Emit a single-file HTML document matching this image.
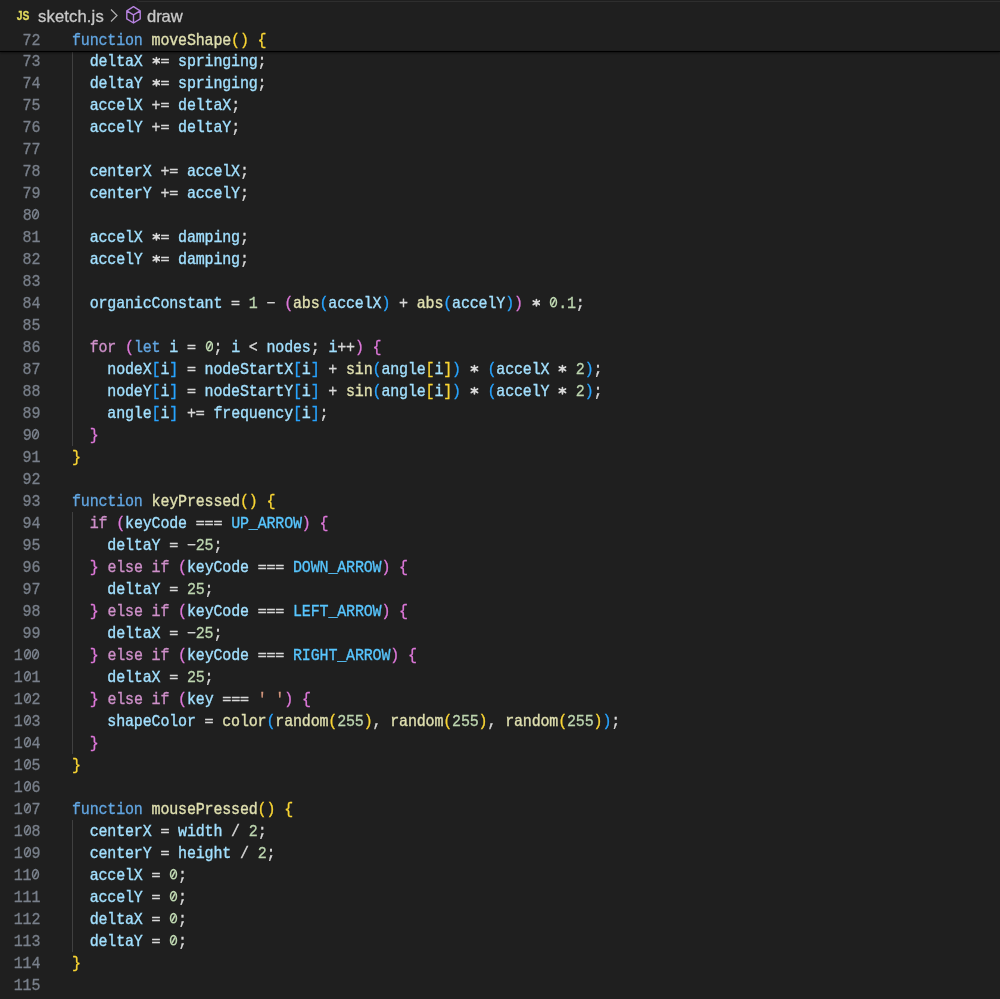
<!DOCTYPE html>
<html><head><meta charset="utf-8">
<style>
html,body{margin:0;padding:0;background:#1f1f1f;}
body{width:1000px;height:999px;overflow:hidden;background:#1f1f1f;position:relative;font-family:"Liberation Mono",monospace;}
.ln,.cl{-webkit-text-stroke:0.3px currentColor;will-change:transform;transform-origin:0 3.7px;transform:scaleY(1.06);}
.eq{display:inline-block;transform:scaleY(0.84);transform-origin:50% 10.1px;-webkit-text-stroke:0.5px currentColor}
.ln{position:absolute;left:0;width:40.3px;text-align:right;height:22px;line-height:22px;font-size:15px;letter-spacing:-0.165px;color:#787f8a;white-space:pre;}
.cl{position:absolute;left:72.1px;height:22px;line-height:22px;font-size:15px;letter-spacing:-0.165px;color:#d8d8d8;white-space:pre;}
.k{color:#62a6e2}.c{color:#cf90ca}.f{color:#e0e0b0}.v{color:#a2e0ff}.n{color:#bdd6b0}.s{color:#d6987e}.K{color:#58c6ff}
.y{color:#fad634}.m{color:#de78da}.b{color:#28a4ff}
.as{display:inline-block;vertical-align:top;}.as path{stroke:#d8d8d8;stroke-width:1.75;stroke-linecap:round;fill:none}
.zr{display:inline-block;vertical-align:top;}.zr ellipse,.zr path{stroke:currentColor;stroke-width:1.6;fill:none}
.ig{position:absolute;left:72.1px;width:1.4px;background:#404040;}
#sticky{position:absolute;left:0;top:30.3px;width:1000px;height:20.7px;background:#1f1f1f;}
#shadow{position:absolute;left:0;top:50.6px;width:1000px;height:1.6px;background:#000;box-shadow:0 1px 2px rgba(0,0,0,0.7);}
#bc{position:absolute;left:0;top:0;width:1000px;height:30px;background:#1f1f1f;font-family:"Liberation Sans",sans-serif;}
#bc .t{position:absolute;top:0;line-height:30px;font-size:16px;color:#c8c8c8;white-space:pre;-webkit-text-stroke:0.3px currentColor;will-change:transform;}
#topline{position:absolute;left:137px;top:0;width:870px;height:1px;border-bottom:1px solid #2e2e2e;border-left:1px solid #2e2e2e;border-radius:0 0 0 3px;}
</style></head><body>
<div class="ig" style="top:50px;height:396px"></div><div class="ig" style="top:512px;height:242px"></div><div class="ig" style="top:820px;height:132px"></div>
<div class="ln" style="top:51px">73</div><div class="cl" style="top:51px">  <span class="v">deltaX</span> <svg class="as" width="8.8365" height="22" viewBox="0 0 8.8365 22"><path d="M4.42 6.5V12.3M1.3 7.7L7.54 11.1M1.3 11.1L7.54 7.7"/></svg><span class="eq">=</span> <span class="v">springing</span>;</div>
<div class="ln" style="top:73px">74</div><div class="cl" style="top:73px">  <span class="v">deltaY</span> <svg class="as" width="8.8365" height="22" viewBox="0 0 8.8365 22"><path d="M4.42 6.5V12.3M1.3 7.7L7.54 11.1M1.3 11.1L7.54 7.7"/></svg><span class="eq">=</span> <span class="v">springing</span>;</div>
<div class="ln" style="top:95px">75</div><div class="cl" style="top:95px">  <span class="v">accelX</span> +<span class="eq">=</span> <span class="v">deltaX</span>;</div>
<div class="ln" style="top:117px">76</div><div class="cl" style="top:117px">  <span class="v">accelY</span> +<span class="eq">=</span> <span class="v">deltaY</span>;</div>
<div class="ln" style="top:139px">77</div><div class="cl" style="top:139px"></div>
<div class="ln" style="top:161px">78</div><div class="cl" style="top:161px">  <span class="v">centerX</span> +<span class="eq">=</span> <span class="v">accelX</span>;</div>
<div class="ln" style="top:183px">79</div><div class="cl" style="top:183px">  <span class="v">centerY</span> +<span class="eq">=</span> <span class="v">accelY</span>;</div>
<div class="ln" style="top:205px">8<svg class="zr" width="8.8365" height="22" viewBox="0 0 8.8365 22"><ellipse cx="4.5" cy="8.9" rx="2.95" ry="4.3"/><path d="M3.0 11.5L6.0 6.3"/></svg></div><div class="cl" style="top:205px"></div>
<div class="ln" style="top:227px">81</div><div class="cl" style="top:227px">  <span class="v">accelX</span> <svg class="as" width="8.8365" height="22" viewBox="0 0 8.8365 22"><path d="M4.42 6.5V12.3M1.3 7.7L7.54 11.1M1.3 11.1L7.54 7.7"/></svg><span class="eq">=</span> <span class="v">damping</span>;</div>
<div class="ln" style="top:249px">82</div><div class="cl" style="top:249px">  <span class="v">accelY</span> <svg class="as" width="8.8365" height="22" viewBox="0 0 8.8365 22"><path d="M4.42 6.5V12.3M1.3 7.7L7.54 11.1M1.3 11.1L7.54 7.7"/></svg><span class="eq">=</span> <span class="v">damping</span>;</div>
<div class="ln" style="top:271px">83</div><div class="cl" style="top:271px"></div>
<div class="ln" style="top:293px">84</div><div class="cl" style="top:293px">  <span class="v">organicConstant</span> <span class="eq">=</span> <span class="n">1</span> − <span class="m">(</span><span class="f">abs</span><span class="b">(</span><span class="v">accelX</span><span class="b">)</span> + <span class="f">abs</span><span class="b">(</span><span class="v">accelY</span><span class="b">)</span><span class="m">)</span> <svg class="as" width="8.8365" height="22" viewBox="0 0 8.8365 22"><path d="M4.42 6.5V12.3M1.3 7.7L7.54 11.1M1.3 11.1L7.54 7.7"/></svg> <span class="n"><svg class="zr" width="8.8365" height="22" viewBox="0 0 8.8365 22"><ellipse cx="4.5" cy="8.9" rx="2.95" ry="4.3"/><path d="M3.0 11.5L6.0 6.3"/></svg>.1</span>;</div>
<div class="ln" style="top:315px">85</div><div class="cl" style="top:315px"></div>
<div class="ln" style="top:337px">86</div><div class="cl" style="top:337px">  <span class="c">for</span> <span class="m">(</span><span class="k">let</span> <span class="v">i</span> <span class="eq">=</span> <span class="n"><svg class="zr" width="8.8365" height="22" viewBox="0 0 8.8365 22"><ellipse cx="4.5" cy="8.9" rx="2.95" ry="4.3"/><path d="M3.0 11.5L6.0 6.3"/></svg></span>; <span class="v">i</span> &lt; <span class="v">nodes</span>; <span class="v">i</span>++<span class="m">)</span> <span class="m">{</span></div>
<div class="ln" style="top:359px">87</div><div class="cl" style="top:359px">    <span class="v">nodeX</span><span class="b">[</span><span class="v">i</span><span class="b">]</span> <span class="eq">=</span> <span class="v">nodeStartX</span><span class="b">[</span><span class="v">i</span><span class="b">]</span> + <span class="f">sin</span><span class="b">(</span><span class="v">angle</span><span class="y">[</span><span class="v">i</span><span class="y">]</span><span class="b">)</span> <svg class="as" width="8.8365" height="22" viewBox="0 0 8.8365 22"><path d="M4.42 6.5V12.3M1.3 7.7L7.54 11.1M1.3 11.1L7.54 7.7"/></svg> <span class="b">(</span><span class="v">accelX</span> <svg class="as" width="8.8365" height="22" viewBox="0 0 8.8365 22"><path d="M4.42 6.5V12.3M1.3 7.7L7.54 11.1M1.3 11.1L7.54 7.7"/></svg> <span class="n">2</span><span class="b">)</span>;</div>
<div class="ln" style="top:381px">88</div><div class="cl" style="top:381px">    <span class="v">nodeY</span><span class="b">[</span><span class="v">i</span><span class="b">]</span> <span class="eq">=</span> <span class="v">nodeStartY</span><span class="b">[</span><span class="v">i</span><span class="b">]</span> + <span class="f">sin</span><span class="b">(</span><span class="v">angle</span><span class="y">[</span><span class="v">i</span><span class="y">]</span><span class="b">)</span> <svg class="as" width="8.8365" height="22" viewBox="0 0 8.8365 22"><path d="M4.42 6.5V12.3M1.3 7.7L7.54 11.1M1.3 11.1L7.54 7.7"/></svg> <span class="b">(</span><span class="v">accelY</span> <svg class="as" width="8.8365" height="22" viewBox="0 0 8.8365 22"><path d="M4.42 6.5V12.3M1.3 7.7L7.54 11.1M1.3 11.1L7.54 7.7"/></svg> <span class="n">2</span><span class="b">)</span>;</div>
<div class="ln" style="top:403px">89</div><div class="cl" style="top:403px">    <span class="v">angle</span><span class="b">[</span><span class="v">i</span><span class="b">]</span> +<span class="eq">=</span> <span class="v">frequency</span><span class="b">[</span><span class="v">i</span><span class="b">]</span>;</div>
<div class="ln" style="top:425px">9<svg class="zr" width="8.8365" height="22" viewBox="0 0 8.8365 22"><ellipse cx="4.5" cy="8.9" rx="2.95" ry="4.3"/><path d="M3.0 11.5L6.0 6.3"/></svg></div><div class="cl" style="top:425px">  <span class="m">}</span></div>
<div class="ln" style="top:447px">91</div><div class="cl" style="top:447px"><span class="y">}</span></div>
<div class="ln" style="top:469px">92</div><div class="cl" style="top:469px"></div>
<div class="ln" style="top:491px">93</div><div class="cl" style="top:491px"><span class="k">function</span> <span class="f">keyPressed</span><span class="y">()</span> <span class="y">{</span></div>
<div class="ln" style="top:513px">94</div><div class="cl" style="top:513px">  <span class="c">if</span> <span class="m">(</span><span class="v">keyCode</span> <span class="eq">=</span><span class="eq">=</span><span class="eq">=</span> <span class="K">UP_ARROW</span><span class="m">)</span> <span class="m">{</span></div>
<div class="ln" style="top:535px">95</div><div class="cl" style="top:535px">    <span class="v">deltaY</span> <span class="eq">=</span> −<span class="n">25</span>;</div>
<div class="ln" style="top:557px">96</div><div class="cl" style="top:557px">  <span class="m">}</span> <span class="c">else</span> <span class="c">if</span> <span class="m">(</span><span class="v">keyCode</span> <span class="eq">=</span><span class="eq">=</span><span class="eq">=</span> <span class="K">DOWN_ARROW</span><span class="m">)</span> <span class="m">{</span></div>
<div class="ln" style="top:579px">97</div><div class="cl" style="top:579px">    <span class="v">deltaY</span> <span class="eq">=</span> <span class="n">25</span>;</div>
<div class="ln" style="top:601px">98</div><div class="cl" style="top:601px">  <span class="m">}</span> <span class="c">else</span> <span class="c">if</span> <span class="m">(</span><span class="v">keyCode</span> <span class="eq">=</span><span class="eq">=</span><span class="eq">=</span> <span class="K">LEFT_ARROW</span><span class="m">)</span> <span class="m">{</span></div>
<div class="ln" style="top:623px">99</div><div class="cl" style="top:623px">    <span class="v">deltaX</span> <span class="eq">=</span> −<span class="n">25</span>;</div>
<div class="ln" style="top:645px">1<svg class="zr" width="8.8365" height="22" viewBox="0 0 8.8365 22"><ellipse cx="4.5" cy="8.9" rx="2.95" ry="4.3"/><path d="M3.0 11.5L6.0 6.3"/></svg><svg class="zr" width="8.8365" height="22" viewBox="0 0 8.8365 22"><ellipse cx="4.5" cy="8.9" rx="2.95" ry="4.3"/><path d="M3.0 11.5L6.0 6.3"/></svg></div><div class="cl" style="top:645px">  <span class="m">}</span> <span class="c">else</span> <span class="c">if</span> <span class="m">(</span><span class="v">keyCode</span> <span class="eq">=</span><span class="eq">=</span><span class="eq">=</span> <span class="K">RIGHT_ARROW</span><span class="m">)</span> <span class="m">{</span></div>
<div class="ln" style="top:667px">1<svg class="zr" width="8.8365" height="22" viewBox="0 0 8.8365 22"><ellipse cx="4.5" cy="8.9" rx="2.95" ry="4.3"/><path d="M3.0 11.5L6.0 6.3"/></svg>1</div><div class="cl" style="top:667px">    <span class="v">deltaX</span> <span class="eq">=</span> <span class="n">25</span>;</div>
<div class="ln" style="top:689px">1<svg class="zr" width="8.8365" height="22" viewBox="0 0 8.8365 22"><ellipse cx="4.5" cy="8.9" rx="2.95" ry="4.3"/><path d="M3.0 11.5L6.0 6.3"/></svg>2</div><div class="cl" style="top:689px">  <span class="m">}</span> <span class="c">else</span> <span class="c">if</span> <span class="m">(</span><span class="v">key</span> <span class="eq">=</span><span class="eq">=</span><span class="eq">=</span> <span class="s">&#x27; &#x27;</span><span class="m">)</span> <span class="m">{</span></div>
<div class="ln" style="top:711px">1<svg class="zr" width="8.8365" height="22" viewBox="0 0 8.8365 22"><ellipse cx="4.5" cy="8.9" rx="2.95" ry="4.3"/><path d="M3.0 11.5L6.0 6.3"/></svg>3</div><div class="cl" style="top:711px">    <span class="v">shapeColor</span> <span class="eq">=</span> <span class="f">color</span><span class="b">(</span><span class="f">random</span><span class="y">(</span><span class="n">255</span><span class="y">)</span>, <span class="f">random</span><span class="y">(</span><span class="n">255</span><span class="y">)</span>, <span class="f">random</span><span class="y">(</span><span class="n">255</span><span class="y">)</span><span class="b">)</span>;</div>
<div class="ln" style="top:733px">1<svg class="zr" width="8.8365" height="22" viewBox="0 0 8.8365 22"><ellipse cx="4.5" cy="8.9" rx="2.95" ry="4.3"/><path d="M3.0 11.5L6.0 6.3"/></svg>4</div><div class="cl" style="top:733px">  <span class="m">}</span></div>
<div class="ln" style="top:755px">1<svg class="zr" width="8.8365" height="22" viewBox="0 0 8.8365 22"><ellipse cx="4.5" cy="8.9" rx="2.95" ry="4.3"/><path d="M3.0 11.5L6.0 6.3"/></svg>5</div><div class="cl" style="top:755px"><span class="y">}</span></div>
<div class="ln" style="top:777px">1<svg class="zr" width="8.8365" height="22" viewBox="0 0 8.8365 22"><ellipse cx="4.5" cy="8.9" rx="2.95" ry="4.3"/><path d="M3.0 11.5L6.0 6.3"/></svg>6</div><div class="cl" style="top:777px"></div>
<div class="ln" style="top:799px">1<svg class="zr" width="8.8365" height="22" viewBox="0 0 8.8365 22"><ellipse cx="4.5" cy="8.9" rx="2.95" ry="4.3"/><path d="M3.0 11.5L6.0 6.3"/></svg>7</div><div class="cl" style="top:799px"><span class="k">function</span> <span class="f">mousePressed</span><span class="y">()</span> <span class="y">{</span></div>
<div class="ln" style="top:821px">1<svg class="zr" width="8.8365" height="22" viewBox="0 0 8.8365 22"><ellipse cx="4.5" cy="8.9" rx="2.95" ry="4.3"/><path d="M3.0 11.5L6.0 6.3"/></svg>8</div><div class="cl" style="top:821px">  <span class="v">centerX</span> <span class="eq">=</span> <span class="v">width</span> / <span class="n">2</span>;</div>
<div class="ln" style="top:843px">1<svg class="zr" width="8.8365" height="22" viewBox="0 0 8.8365 22"><ellipse cx="4.5" cy="8.9" rx="2.95" ry="4.3"/><path d="M3.0 11.5L6.0 6.3"/></svg>9</div><div class="cl" style="top:843px">  <span class="v">centerY</span> <span class="eq">=</span> <span class="v">height</span> / <span class="n">2</span>;</div>
<div class="ln" style="top:865px">11<svg class="zr" width="8.8365" height="22" viewBox="0 0 8.8365 22"><ellipse cx="4.5" cy="8.9" rx="2.95" ry="4.3"/><path d="M3.0 11.5L6.0 6.3"/></svg></div><div class="cl" style="top:865px">  <span class="v">accelX</span> <span class="eq">=</span> <span class="n"><svg class="zr" width="8.8365" height="22" viewBox="0 0 8.8365 22"><ellipse cx="4.5" cy="8.9" rx="2.95" ry="4.3"/><path d="M3.0 11.5L6.0 6.3"/></svg></span>;</div>
<div class="ln" style="top:887px">111</div><div class="cl" style="top:887px">  <span class="v">accelY</span> <span class="eq">=</span> <span class="n"><svg class="zr" width="8.8365" height="22" viewBox="0 0 8.8365 22"><ellipse cx="4.5" cy="8.9" rx="2.95" ry="4.3"/><path d="M3.0 11.5L6.0 6.3"/></svg></span>;</div>
<div class="ln" style="top:909px">112</div><div class="cl" style="top:909px">  <span class="v">deltaX</span> <span class="eq">=</span> <span class="n"><svg class="zr" width="8.8365" height="22" viewBox="0 0 8.8365 22"><ellipse cx="4.5" cy="8.9" rx="2.95" ry="4.3"/><path d="M3.0 11.5L6.0 6.3"/></svg></span>;</div>
<div class="ln" style="top:931px">113</div><div class="cl" style="top:931px">  <span class="v">deltaY</span> <span class="eq">=</span> <span class="n"><svg class="zr" width="8.8365" height="22" viewBox="0 0 8.8365 22"><ellipse cx="4.5" cy="8.9" rx="2.95" ry="4.3"/><path d="M3.0 11.5L6.0 6.3"/></svg></span>;</div>
<div class="ln" style="top:953px">114</div><div class="cl" style="top:953px"><span class="y">}</span></div>
<div class="ln" style="top:975px">115</div><div class="cl" style="top:975px"></div>
<div id="sticky"><div class="ln" style="top:0px">72</div><div class="cl" style="top:0px"><span class="k">function</span> <span class="f">moveShape</span><span class="y">()</span> <span class="y">{</span></div></div>
<div id="shadow"></div>
<div id="bc">
<div id="topline"></div>
<svg style="position:absolute;left:15px;top:6.5px;will-change:transform" width="17" height="15" viewBox="0 0 17 15"><text x="1.7" y="12.6" font-family="Liberation Sans" font-weight="bold" font-size="13.6" fill="#e4dc5e" stroke="#e4dc5e" stroke-width="0.3" textLength="12.6" lengthAdjust="spacingAndGlyphs">JS</text></svg>
<div class="t" style="left:38px;top:2px;font-size:16.6px;letter-spacing:0.15px">sketch.js</div>
<svg style="position:absolute;left:109px;top:8px" width="10" height="15" viewBox="0 0 10 15"><path d="M2 1.5 L8 7.5 L2 13.5" fill="none" stroke="#b0b0b0" stroke-width="1.2"/></svg>
<svg style="position:absolute;left:123.6px;top:5px" width="19" height="20" viewBox="0 0 19 20"><path d="M9.5 1.7 L16.2 5.8 L16.2 13.9 L9.5 18 L2.8 13.9 L2.8 5.8 Z M2.8 5.8 L9.5 9.8 L16.2 5.8 M9.5 9.8 L9.5 18" fill="none" stroke="#b783e0" stroke-width="1.4" stroke-linejoin="round"/></svg>
<div class="t" style="left:146.8px;top:1.5px;font-size:16.6px;letter-spacing:-0.1px">draw</div>
</div>
</body></html>
